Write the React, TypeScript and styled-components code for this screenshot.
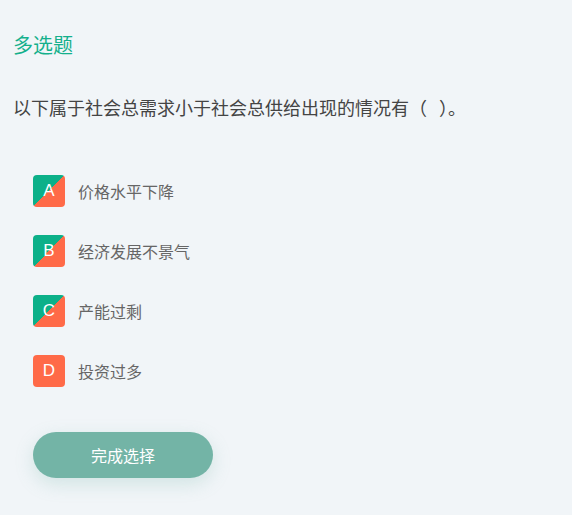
import React from "react";
import styled, { createGlobalStyle } from "styled-components";

const Global = createGlobalStyle`
  html, body { margin: 0; padding: 0; background: #f1f5f8; }
  body { font-family: "Microsoft YaHei", "Noto Sans CJK SC", "Noto Sans", sans-serif; }
`;

const Page = styled.div`
  padding: 31px 13px 40px 13px;
  display: flex;
  flex-direction: column;
`;

const Title = styled.div`
  font-size: 20px;
  line-height: 28px;
  color: #14b08c;
`;

const Question = styled.div`
  margin-top: 34px;
  font-size: 18px;
  line-height: 28px;
  color: #444;
`;

const Options = styled.div`
  margin-top: 54px;
  padding-left: 20px;
  display: flex;
  flex-direction: column;
  gap: 28px;
`;

const Option = styled.div`
  display: flex;
  align-items: center;
  gap: 13px;
  height: 32px;
`;

const Badge = styled.div<{ $checked: boolean }>`
  width: 32px;
  height: 32px;
  border-radius: 4px;
  display: flex;
  align-items: center;
  justify-content: center;
  color: #fff;
  font-family: "Liberation Sans", Arial, sans-serif;
  font-size: 17px;
  background: ${(p) =>
    p.$checked
      ? "linear-gradient(to bottom right, #0cb089 50%, #ff6a48 50%)"
      : "#ff6a48"};
`;

const Label = styled.div`
  font-size: 16px;
  color: #666;
`;

const Submit = styled.button`
  margin: 45px 0 0 20px;
  width: 180px;
  height: 46px;
  border: none;
  border-radius: 23px;
  background: #73b4a6;
  color: #fff;
  font-family: inherit;
  font-size: 16px;
  box-shadow: 0 6px 18px rgba(115, 180, 166, 0.25);
  cursor: pointer;
`;

const options = [
  { key: "A", text: "价格水平下降", checked: true },
  { key: "B", text: "经济发展不景气", checked: true },
  { key: "C", text: "产能过剩", checked: true },
  { key: "D", text: "投资过多", checked: false },
];

export default function App() {
  return (
    <>
      <Global />
      <Page>
        <Title>多选题</Title>
        <Question>以下属于社会总需求小于社会总供给出现的情况有（&nbsp;&nbsp;&nbsp;）。</Question>
        <Options>
          {options.map((o) => (
            <Option key={o.key}>
              <Badge $checked={o.checked}>{o.key}</Badge>
              <Label>{o.text}</Label>
            </Option>
          ))}
        </Options>
        <Submit>完成选择</Submit>
      </Page>
    </>
  );
}
